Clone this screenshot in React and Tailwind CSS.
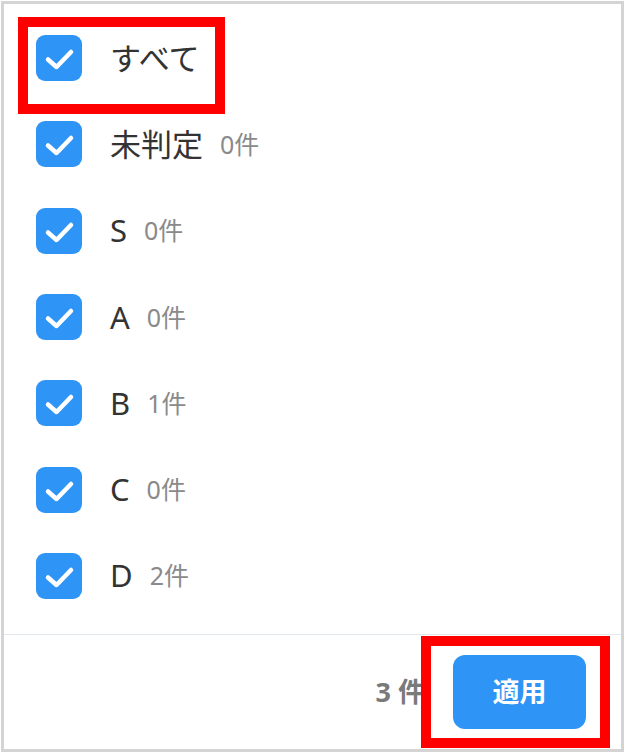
const rows = [
  { label: 'すべて' },
  { label: '未判定', count: '0件' },
  { label: 'S', count: '0件' },
  { label: 'A', count: '0件' },
  { label: 'B', count: '1件' },
  { label: 'C', count: '0件' },
  { label: 'D', count: '2件' },
];

const CheckBox = () => (
  <div className="w-[46px] h-[46px] rounded-[9px] bg-[#2e94f6] flex items-center justify-center shrink-0">
    <svg width="46" height="46" viewBox="0 0 46 46" fill="none">
      <path
        d="M12 24.5 L20.5 32 L35 17"
        stroke="white"
        strokeWidth="4.5"
        strokeLinecap="round"
        strokeLinejoin="round"
      />
    </svg>
  </div>
);

const App = () => {
  return (
    <div
      className="relative w-[627px] h-[756px] bg-white overflow-hidden"
      style={{ fontFamily: '"Noto Sans", "Noto Sans CJK JP", sans-serif' }}
    >
      <div className="ml-[1px] mt-[1px] w-[623px] h-[751px] border-[3px] border-[#d4d4d4] flex flex-col">
        {/* List */}
        <div className="flex flex-col pt-[11px] pb-[15px]">
          {rows.map((row) => (
            <div key={row.label} className="h-[86.3px] flex items-center pl-[32px]">
              <CheckBox />
              <span className="ml-[28px] text-[31px] leading-none text-[#333333]">{row.label}</span>
              {row.count && (
                <span className="ml-[17px] text-[25px] leading-none text-[#8a8a8a]">{row.count}</span>
              )}
            </div>
          ))}
        </div>

        {/* Footer */}
        <div className="flex-1 border-t border-[#e3e8ee] flex items-center justify-end pr-[35px]">
          <span className="text-[27px] font-bold text-[#7a7a7a] mr-[28px]">3 件</span>
          <button className="w-[133px] h-[74px] rounded-[12px] bg-[#2e94f6] text-white text-[27px] font-bold">
            適用
          </button>
        </div>
      </div>

      {/* annotation boxes */}
      <div className="absolute left-[18px] top-[17px] w-[207px] h-[97px] border-[10px] border-[#ff0000]" />
      <div className="absolute left-[421px] top-[636px] w-[189px] h-[112px] border-[10px] border-[#ff0000]" />
    </div>
  );
};

export default App;
